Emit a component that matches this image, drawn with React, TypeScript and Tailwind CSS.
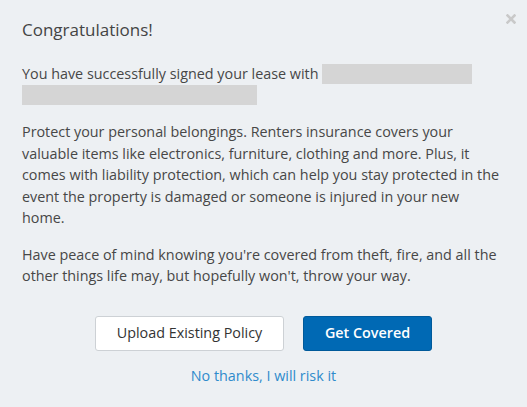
import React from 'react';

export default function App() {
  return (
    <div
      className="relative w-[527px] h-[407px] bg-[#edf0f3] text-[#474747] px-[22px] pt-[18px]"
      style={{ fontFamily: '"Open Sans", "Noto Sans", sans-serif' }}
    >
      {/* close button */}
      <button className="absolute right-[10px] top-[13px] w-[12px] h-[12px] flex items-center justify-center">
        <svg width="10" height="10" viewBox="0 0 10 10">
          <path d="M1.5 1.5 L8.5 8.5 M8.5 1.5 L1.5 8.5" stroke="#c9c9c9" strokeWidth="2.6" strokeLinecap="square" />
        </svg>
      </button>

      <h1 className="text-[17px] leading-[24px] font-normal text-[#444]">Congratulations!</h1>

      <p className="mt-[21px] text-[14.35px] leading-[21px]">
        You have successfully signed your lease with{' '}
        <span className="inline-block align-top mt-[1px] w-[150px] h-[20px] bg-[#d5d5d5]"></span>
        <br />
        <span className="inline-block align-top mt-[1px] w-[235px] h-[20px] bg-[#d5d5d5]"></span>
      </p>

      <p className="mt-[16px] text-[14.35px] leading-[21.5px]">
        Protect your personal belongings. Renters insurance covers your valuable items like electronics, furniture,
        clothing and more. Plus, it comes with liability protection, which can help you stay protected in the event the
        property is damaged or someone is injured in your new home.
      </p>

      <p className="mt-[15px] text-[14.35px] leading-[21.5px]">
        Have peace of mind knowing you're covered from theft, fire, and all the other things life may, but hopefully
        won't, throw your way.
      </p>

      <div className="mt-[29px] flex justify-center gap-[19px]">
        <button className="h-[35px] w-[189px] rounded-[3px] bg-white border border-[#cdd1d5] text-[14.35px] text-[#333]">
          Upload Existing Policy
        </button>
        <button className="h-[35px] w-[129px] rounded-[3px] bg-[#0069b4] border border-[#005a9a] text-[14.35px] font-semibold text-white">
          Get Covered
        </button>
      </div>

      <div className="mt-[12px] text-center">
        <a className="text-[14.35px] leading-[21px] text-[#2f8bcc] cursor-pointer">No thanks, I will risk it</a>
      </div>
    </div>
  );
}
